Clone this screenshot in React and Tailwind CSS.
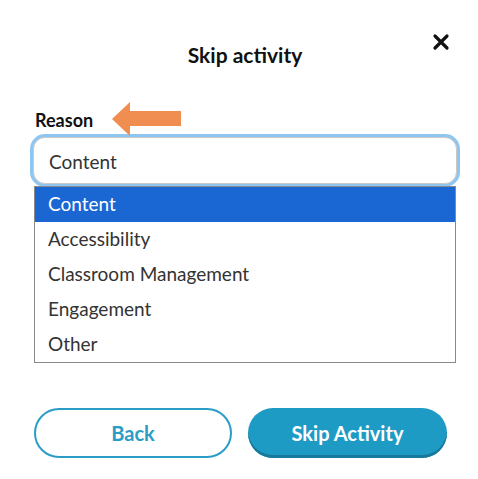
import React from "react";

const options = ["Content", "Accessibility", "Classroom Management", "Engagement", "Other"];

export default function App() {
  return (
    <div className="w-[478px] h-[479px] bg-white relative" style={{ fontFamily: "Lato, 'Open Sans', sans-serif" }}>
      {/* Header */}
      <div className="relative flex justify-center pt-[41px] pl-[12px]">
        <h2 className="text-[21px] font-bold text-[#111] leading-7">Skip activity</h2>
        <button className="absolute right-[28px] top-[33px] text-black">
          <svg width="18" height="18" viewBox="0 0 18 18">
            <path d="M3 3 L15 15 M15 3 L3 15" stroke="#111" strokeWidth="3.2" strokeLinecap="round" />
          </svg>
        </button>
      </div>

      {/* Field */}
      <div className="pl-[32px] pr-[20px] mt-[40px]">
        <div className="relative flex items-center h-[22px]">
          <label className="text-[18px] font-bold text-[#111] ml-[3px]">Reason</label>
          <svg className="absolute left-[80px] top-[-7px]" width="70" height="36" viewBox="0 0 70 36">
            <polygon points="0,17 18,0 18,9 69,9 69,24 18,24 18,34" fill="#f08d50" />
          </svg>
        </div>
        <div className="mt-[6px] h-[47px] rounded-[12px] border border-[#c9c9c9] ring-[3px] ring-[#8fc6f0] bg-white flex items-center px-[15px] pt-[3px] mx-[1px]">
          <span className="text-[19px] text-[#333]">Content</span>
        </div>
        <ul className="mt-[2px] mx-[2px] border border-[#8a8a8a] bg-white">
          {options.map((o, i) => (
            <li
              key={o}
              className={`h-[35px] flex items-center px-[13px] text-[19px] ${i === 0 ? "bg-[#1a66d3] text-white" : "text-[#333]"}`}
            >
              {o}
            </li>
          ))}
        </ul>
      </div>

      {/* Buttons */}
      <div className="flex gap-[16px] pl-[34px] mt-[45px]">
        <button className="w-[198px] h-[50px] rounded-full border-2 border-[#2a9dc7] text-[#2a9dc7] font-bold text-[20px]">
          Back
        </button>
        <button className="w-[199px] h-[50px] rounded-full bg-[#1e9bc5] text-white font-bold text-[20px] shadow-[inset_0_-3px_0_#17799b]">
          Skip Activity
        </button>
      </div>
    </div>
  );
}
